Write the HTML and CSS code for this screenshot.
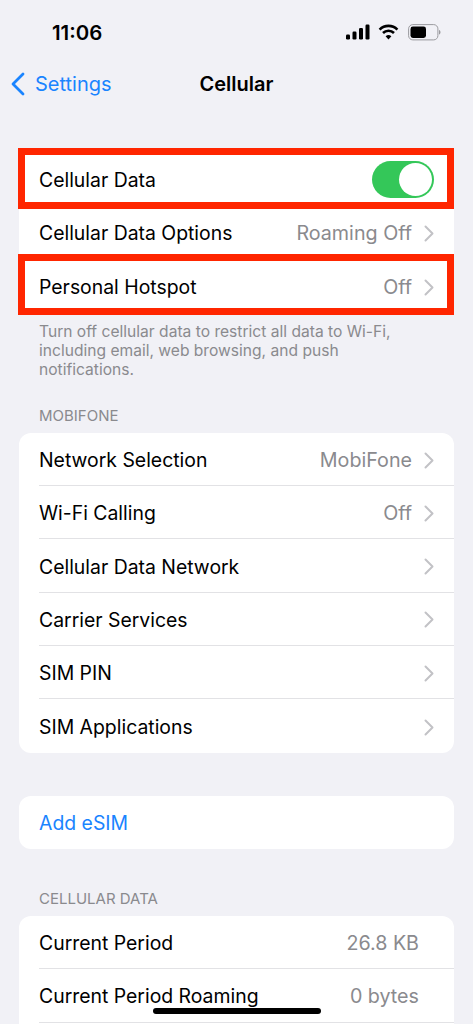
FILE: index.html
```html
<!DOCTYPE html>
<html lang="en">
<head>
    <meta charset="UTF-8">
    <meta name="viewport" content="width=device-width, initial-scale=1.0">
    <title>Cellular</title>
    <link rel="stylesheet" href="styles.css">
</head>
<body>
    <div class="phone">
        <div class="status-bar">
            <span class="time">11:06</span>
            <div class="status-icons">
                <svg class="signal" width="24" height="16" viewBox="0 0 24 16">
                    <rect x="0" y="10.5" width="4" height="5" rx="1.2"/>
                    <rect x="6.5" y="7.5" width="4" height="8" rx="1.2"/>
                    <rect x="13" y="4" width="4" height="11.5" rx="1.2"/>
                    <rect x="19.5" y="0.5" width="4" height="15" rx="1.2"/>
                </svg>
                <svg class="wifi" width="21" height="16" viewBox="0 0 21 16">
                    <path d="M1.6 5.6a12.6 12.6 0 0 1 17.8 0" fill="none" stroke="#000" stroke-width="2.6"/>
                    <path d="M5 9a7.8 7.8 0 0 1 11 0" fill="none" stroke="#000" stroke-width="2.6"/>
                    <path d="M10.5 15.6 7.6 12.3a4.2 4.2 0 0 1 5.8 0z"/>
                </svg>
                <svg class="battery" width="34" height="17" viewBox="0 0 34 17">
                    <rect x="0.6" y="0.6" width="29.3" height="15.3" rx="4.2" fill="none" stroke="#9a9a9e" stroke-width="1"/>
                    <rect x="2.5" y="2.5" width="15.5" height="11.5" rx="2.4"/>
                    <path d="M31 6v4.6c.9-.3 1.5-1.2 1.5-2.3S31.900 6.300 31 6z" fill="#9a9a9e"/>
                </svg>
            </div>
        </div>

        <div class="nav-bar">
            <a class="back">
                <svg width="16" height="24" viewBox="0 0 16 24">
                    <path d="M14 2 4 12l10 10" fill="none" stroke="#1a84ff" stroke-width="2.800" stroke-linecap="round" stroke-linejoin="round"/>
                </svg>
                <span>Settings</span>
            </a>
            <div class="nav-title">Cellular</div>
        </div>

        <div class="list first-list">
            <div class="row">
                <span class="label">Cellular Data</span>
                <div class="toggle"><div class="knob"></div></div>
            </div>
            <div class="row">
                <span class="label">Cellular Data Options</span>
                <span class="value">Roaming Off</span>
                <svg class="chevron" width="10" height="17" viewBox="0 0 10 17"><path d="M1.500 1.500 8.500 8.500l-7 7"/></svg>
            </div>
            <div class="row">
                <span class="label">Personal Hotspot</span>
                <span class="value">Off</span>
                <svg class="chevron" width="10" height="17" viewBox="0 0 10 17"><path d="M1.500 1.500 8.500 8.500l-7 7"/></svg>
            </div>
        </div>
        <p class="note">Turn off cellular data to restrict all data to Wi-Fi, including email, web browsing, and push notifications.</p>

        <div class="section-title">MOBIFONE</div>
        <div class="list">
            <div class="row">
                <span class="label">Network Selection</span>
                <span class="value">MobiFone</span>
                <svg class="chevron" width="10" height="17" viewBox="0 0 10 17"><path d="M1.500 1.500 8.500 8.500l-7 7"/></svg>
            </div>
            <div class="row">
                <span class="label">Wi-Fi Calling</span>
                <span class="value">Off</span>
                <svg class="chevron" width="10" height="17" viewBox="0 0 10 17"><path d="M1.500 1.500 8.500 8.500l-7 7"/></svg>
            </div>
            <div class="row">
                <span class="label">Cellular Data Network</span>
                <svg class="chevron" width="10" height="17" viewBox="0 0 10 17"><path d="M1.500 1.500 8.500 8.500l-7 7"/></svg>
            </div>
            <div class="row">
                <span class="label">Carrier Services</span>
                <svg class="chevron" width="10" height="17" viewBox="0 0 10 17"><path d="M1.500 1.500 8.500 8.500l-7 7"/></svg>
            </div>
            <div class="row">
                <span class="label">SIM PIN</span>
                <svg class="chevron" width="10" height="17" viewBox="0 0 10 17"><path d="M1.500 1.500 8.500 8.500l-7 7"/></svg>
            </div>
            <div class="row">
                <span class="label">SIM Applications</span>
                <svg class="chevron" width="10" height="17" viewBox="0 0 10 17"><path d="M1.500 1.500 8.500 8.500l-7 7"/></svg>
            </div>
        </div>

        <div class="list esim-list">
            <div class="row">
                <span class="label link">Add eSIM</span>
            </div>
        </div>

        <div class="section-title data-title">CELLULAR DATA</div>
        <div class="list">
            <div class="row">
                <span class="label">Current Period</span>
                <span class="value plain">26.8 KB</span>
            </div>
            <div class="row">
                <span class="label">Current Period Roaming</span>
                <span class="value plain">0 bytes</span>
            </div>
            <div class="row"></div>
        </div>

        <div class="red-box box-data"></div>
        <div class="red-box box-hotspot"></div>
        <div class="home-bar"></div>
    </div>
</body>
</html>
```

FILE: styles.css
```css
* {
    box-sizing: border-box;
}
body {
    margin: 0;
    padding: 0;
    background-color: #f2f2f7;
    font-family: Inter, "Noto Sans", sans-serif;
    color: #000;
}
.phone {
    position: relative;
    width: 473px;
    height: 1024px;
    overflow: hidden;
    background-color: #f1f1f6;
}

/* status bar */
.status-bar {
    display: flex;
    justify-content: space-between;
    align-items: center;
    height: 32px;
    margin-top: 16px;
    padding: 0 31px 0 52px;
}
.time {
    font-size: 20.400px;
    font-weight: 600;
    padding-top: 1px;
}
.status-icons {
    display: flex;
    align-items: center;
}
.status-icons svg {
    display: block;
}
.wifi {
    margin: 0 9px 0 8px;
}

/* nav */
.nav-bar {
    position: relative;
    display: flex;
    align-items: center;
    justify-content: center;
    height: 40px;
    margin-top: 16px;
}
.back {
    position: absolute;
    left: 9px;
    top: 8px;
    display: flex;
    align-items: center;
    gap: 10px;
    color: #1a84ff;
    font-size: 20px;
}
.nav-title {
    font-size: 20px;
    font-weight: 600;
}

/* lists */
.list {
    margin: 0 19px;
    background-color: #fff;
    border-radius: 12px;
    overflow: hidden;
}
.first-list {
    margin-top: 49px;
}
.row {
    display: flex;
    align-items: center;
    height: 53.3px;
    padding: 2px 20px 0 0;
    margin-left: 20px;
    border-bottom: 1px solid #e2e2e5;
    font-size: 19.400px;
}
.row:last-child {
    border-bottom: none;
}
.label {
    flex: 1;
    white-space: nowrap;
}
.link {
    color: #1a84ff;
}
.value {
    color: #8a8a8e;
    font-size: 19.700px;
    white-space: nowrap;
    margin-right: 12px;
}
.value.plain {
    margin-right: 15px;
}
.chevron {
    flex: none;
}
.chevron path {
    fill: none;
    stroke: #c2c2c6;
    stroke-width: 2;
    stroke-linecap: round;
    stroke-linejoin: round;
}

/* switch */
.toggle {
    width: 62px;
    height: 37px;
    margin-top: -2px;
    padding: 2px;
    display: flex;
    justify-content: flex-end;
    background-color: #34c759;
    border-radius: 19px;
}
.knob {
    width: 33px;
    height: 33px;
    background-color: #fff;
    border-radius: 50%;
}

.note {
    margin: 9px 19px 0;
    padding: 0 20px;
    font-size: 15.600px;
    line-height: 19px;
    color: #8a8a8e;
}
.section-title {
    margin: 27px 39px 8px;
    font-size: 15px;
    line-height: 19px;
    color: #8a8a8e;
}
.esim-list {
    margin-top: 43px;
}
.section-title.data-title {
    margin-top: 40px;
}

/* overlays */
.red-box {
    position: absolute;
    left: 18px;
    width: 436px;
    height: 61px;
    border: 7px solid #ff2600;
}
.box-data {
    top: 148px;
}
.box-hotspot {
    top: 254px;
}
.home-bar {
    position: absolute;
    left: 153px;
    top: 1008px;
    width: 168px;
    height: 6px;
    background-color: #000;
    border-radius: 3px;
}
```
